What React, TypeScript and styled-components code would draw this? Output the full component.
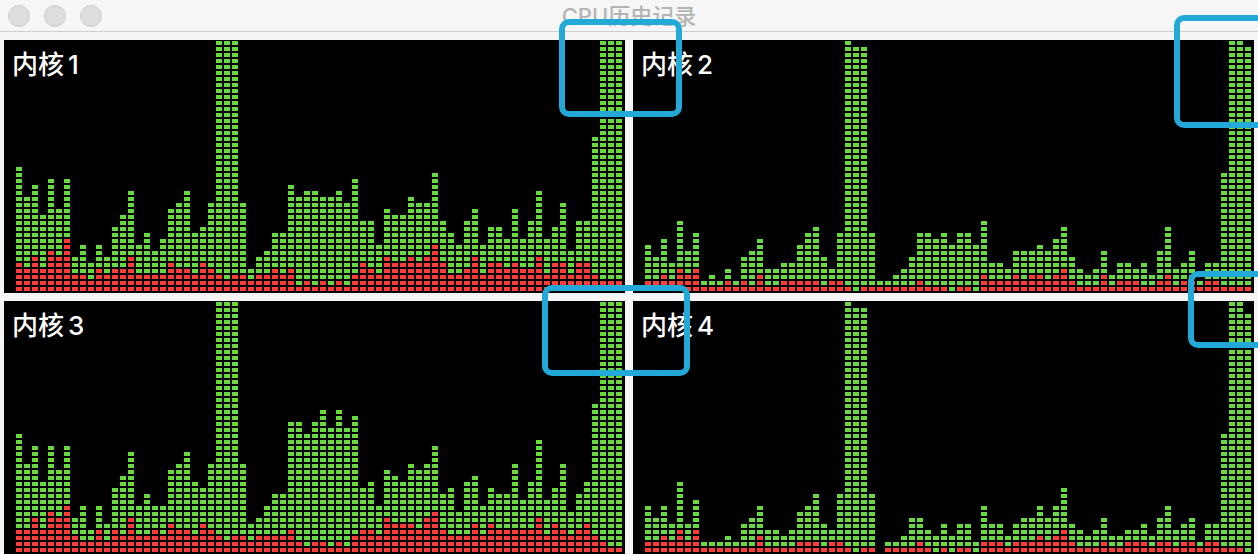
import React from 'react';
import styled, { createGlobalStyle } from 'styled-components';

const GlobalStyle = createGlobalStyle`
  *, *::before, *::after { box-sizing: border-box; }
  body {
    margin: 0;
    background: #f5f5f5;
    font-family: Inter, "Noto Sans CJK SC", sans-serif;
  }
`;

const CELL_WIDTH = 6;
const CELL_HEIGHT = 4;
const COLUMN_PITCH = 8;
const ROW_PITCH = 6;
const ROWS = 42;

const Window = styled.div`
  position: relative;
  overflow: hidden;
`;

const TitleBar = styled.header`
  display: grid;
  grid-template-columns: 1fr auto 1fr;
  align-items: center;
  height: 32px;
  padding: 0 8px;
  border-bottom: 1px solid #cfcfcf;
  background: #f6f6f6;
`;

const WindowButtons = styled.div`
  display: flex;
  gap: 14px;
`;

const WindowButton = styled.button`
  width: 22px;
  height: 22px;
  padding: 0;
  border: 1px solid #cdcdcd;
  border-radius: 50%;
  background: #dddddd;
`;

const Title = styled.h1`
  margin: 0;
  color: #b4b4b4;
  font-size: 22px;
  font-weight: 500;
  line-height: 32px;
`;

const Cores = styled.main`
  display: grid;
  grid-template-columns: repeat(2, minmax(0, 1fr));
  gap: 8px;
  padding: 8px 4px 0;
`;

const Panel = styled.section`
  display: grid;
  padding: 1px 3px 2px 12px;
  background: #000;
  overflow: hidden;
`;

const CoreName = styled.h2`
  grid-area: 1 / 1;
  display: flex;
  gap: 4px;
  margin: 8px 0 0 -4px;
  color: #fff;
  font-size: 26px;
  font-weight: 500;
  line-height: 32px;
`;

const Chart = styled.svg`
  grid-area: 1 / 1;
  display: block;
  justify-self: start;
`;

type Edge = 'middle' | 'right';

const Highlight = styled.div<{ $edge: Edge; $offset: number; $top: number; $width: number; $height: number }>`
  position: absolute;
  top: ${(p) => p.$top}px;
  ${(p) => (p.$edge === 'middle' ? `left: calc(50% - ${p.$offset}px);` : `left: calc(100% - ${p.$offset}px);`)}
  width: ${(p) => p.$width}px;
  height: ${(p) => p.$height}px;
  border: 6px solid #22a9d8;
  border-radius: 10px;
  pointer-events: none;
`;

interface Core {
  id: number;
  total: number[];
  system: number[];
}

const cores: Core[] = [
  {
    id: 1,
    total: [
      21, 16, 18, 13, 19, 14, 19, 6, 8, 5, 8, 6, 11, 13, 17, 8, 10, 7, 9, 14, 15, 17, 10, 11, 15,
      42, 42, 42, 15, 4, 6, 7, 10, 10, 18, 16, 17, 17, 16, 16, 17, 15, 19, 12, 12, 8, 14, 13, 13, 16,
      15, 15, 20, 12, 10, 8, 12, 14, 8, 11, 11, 9, 14, 9, 12, 17, 9, 11, 15, 7, 12, 12, 26, 42, 42, 42,
    ],
    system: [
      5, 4, 6, 4, 7, 6, 9, 3, 3, 2, 4, 3, 4, 4, 6, 3, 3, 3, 3, 5, 4, 4, 3, 5, 4,
      3, 2, 3, 3, 2, 3, 3, 4, 3, 4, 1, 2, 1, 2, 1, 2, 1, 3, 5, 4, 3, 6, 5, 5, 6,
      5, 6, 8, 5, 3, 3, 4, 6, 3, 5, 5, 4, 5, 4, 4, 6, 3, 5, 5, 3, 5, 5, 3, 2, 2, 2,
    ],
  },
  {
    id: 2,
    total: [
      8, 6, 9, 5, 12, 7, 10, 2, 3, 2, 4, 2, 6, 7, 9, 4, 4, 5, 5, 8, 10, 11, 6, 4, 10,
      42, 41, 41, 10, 2, 2, 3, 4, 6, 10, 10, 9, 10, 8, 10, 10, 8, 12, 5, 5, 4, 7, 7, 7, 8,
      7, 9, 11, 6, 4, 3, 4, 7, 3, 5, 5, 4, 5, 3, 7, 11, 4, 5, 7, 2, 5, 5, 20, 42, 42, 41,
    ],
    system: [
      2, 2, 3, 2, 4, 3, 4, 1, 1, 1, 2, 1, 2, 1, 3, 1, 1, 2, 2, 2, 2, 2, 1, 2, 2,
      1, 0, 1, 1, 1, 1, 1, 1, 1, 2, 1, 1, 1, 0, 1, 1, 0, 3, 2, 2, 2, 3, 2, 3, 3,
      2, 3, 4, 2, 1, 1, 1, 3, 1, 2, 2, 2, 1, 1, 2, 3, 1, 2, 2, 1, 2, 2, 1, 1, 1, 1,
    ],
  },
  {
    id: 3,
    total: [
      20, 15, 18, 12, 18, 14, 18, 6, 8, 4, 8, 5, 11, 13, 17, 8, 10, 8, 8, 14, 15, 17, 12, 11, 15,
      42, 42, 42, 15, 5, 6, 8, 10, 10, 22, 22, 20, 22, 24, 21, 24, 21, 23, 11, 12, 8, 14, 13, 12, 15,
      14, 15, 18, 10, 11, 7, 12, 13, 8, 11, 10, 10, 15, 9, 12, 19, 9, 11, 15, 7, 10, 12, 25, 42, 42, 42,
    ],
    system: [
      4, 4, 6, 4, 7, 6, 8, 3, 2, 2, 4, 2, 4, 3, 6, 3, 3, 4, 3, 5, 4, 4, 3, 5, 4,
      3, 2, 3, 3, 2, 3, 3, 3, 3, 4, 2, 1, 2, 2, 1, 2, 1, 3, 4, 4, 3, 6, 5, 5, 5,
      4, 6, 7, 4, 3, 3, 3, 5, 3, 5, 4, 4, 4, 4, 4, 6, 3, 5, 4, 3, 4, 5, 3, 2, 1, 1,
    ],
  },
  {
    id: 4,
    total: [
      8, 6, 8, 5, 12, 5, 9, 2, 2, 2, 3, 2, 5, 6, 8, 4, 4, 3, 4, 7, 8, 10, 5, 4, 10,
      42, 41, 41, 10, 0, 2, 2, 3, 6, 6, 4, 3, 5, 3, 5, 5, 2, 8, 5, 5, 3, 5, 6, 6, 8,
      6, 8, 11, 5, 4, 3, 4, 6, 3, 3, 4, 4, 5, 3, 6, 8, 4, 5, 6, 2, 5, 5, 20, 42, 42, 40,
    ],
    system: [
      2, 2, 3, 2, 4, 2, 4, 1, 1, 1, 1, 1, 1, 1, 3, 1, 1, 1, 1, 2, 2, 2, 1, 2, 2,
      1, 0, 1, 1, 0, 1, 1, 1, 1, 2, 1, 0, 1, 0, 1, 1, 0, 2, 2, 2, 1, 2, 2, 2, 3,
      2, 3, 4, 2, 1, 1, 1, 2, 1, 1, 2, 2, 2, 1, 2, 2, 1, 2, 2, 1, 2, 2, 1, 1, 1, 0,
    ],
  },
];

/* One path of stacked cells per colour: rows `from` (inclusive) to `to` (exclusive), counted from the bottom. */
function cellsPath(from: number[], to: number[]): string {
  let d = '';
  to.forEach((end, column) => {
    for (let row = from[column]; row < end; row += 1) {
      const x = column * COLUMN_PITCH;
      const y = (ROWS - 1 - row) * ROW_PITCH;
      d += `M${x} ${y}h${CELL_WIDTH}v${CELL_HEIGHT}h-${CELL_WIDTH}z`;
    }
  });
  return d;
}

function CorePanel({ core }: { core: Core }) {
  const width = core.total.length * COLUMN_PITCH - (COLUMN_PITCH - CELL_WIDTH);
  const height = ROWS * ROW_PITCH - (ROW_PITCH - CELL_HEIGHT);
  return (
    <Panel aria-labelledby={`core-${core.id}`}>
      <Chart width={width} height={height} aria-hidden="true">
        <path fill="#69d942" d={cellsPath(core.system, core.total)} />
        <path fill="#ff3b37" d={cellsPath(core.total.map(() => 0), core.system)} />
      </Chart>
      <CoreName id={`core-${core.id}`}>
        <span>内核</span>
        <span>{core.id}</span>
      </CoreName>
    </Panel>
  );
}

export default function App() {
  return (
    <Window>
      <GlobalStyle />
      <TitleBar>
        <WindowButtons>
          <WindowButton type="button" aria-label="关闭" />
          <WindowButton type="button" aria-label="最小化" />
          <WindowButton type="button" aria-label="缩放" />
        </WindowButtons>
        <Title>CPU历史记录</Title>
      </TitleBar>
      <Cores>
        {cores.map((core) => (
          <CorePanel key={core.id} core={core} />
        ))}
      </Cores>
      <Highlight $edge="middle" $offset={70} $top={19} $width={123} $height={98} />
      <Highlight $edge="right" $offset={84} $top={15} $width={120} $height={113} />
      <Highlight $edge="middle" $offset={87} $top={285} $width={148} $height={91} />
      <Highlight $edge="right" $offset={70} $top={271} $width={120} $height={77} />
    </Window>
  );
}
